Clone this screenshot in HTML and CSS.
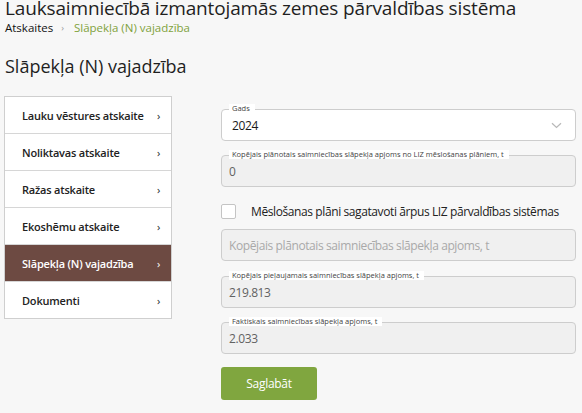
FILE: index.html
```html
<!DOCTYPE html>
<html>
<head>
    <title>Slāpekļa (N) vajadzība</title>
    <link rel="stylesheet" href="styles.css">
</head>
<body>
<div class="page-header">
    <h1 class="app-title">Lauksaimniecībā izmantojamās zemes pārvaldības sistēma</h1>
    <div class="breadcrumb">
        <span class="crumb">Atskaites</span>
        <span class="crumb-sep">›</span>
        <span class="crumb-current">Slāpekļa (N) vajadzība</span>
    </div>
</div>

<h2 class="page-title">Slāpekļa (N) vajadzība</h2>

<div class="content">
    <ul class="side-menu">
        <li class="menu-item"><span>Lauku vēstures atskaite</span><span class="chevron">›</span></li>
        <li class="menu-item"><span>Noliktavas atskaite</span><span class="chevron">›</span></li>
        <li class="menu-item"><span>Ražas atskaite</span><span class="chevron">›</span></li>
        <li class="menu-item"><span>Ekoshēmu atskaite</span><span class="chevron">›</span></li>
        <li class="menu-item active"><span>Slāpekļa (N) vajadzība</span><span class="chevron">›</span></li>
        <li class="menu-item"><span>Dokumenti</span><span class="chevron">›</span></li>
    </ul>

    <form class="report-form">
        <div class="field">
            <span class="field-label">Gads</span>
            <div class="field-box select-box">
                <span class="field-value">2024</span>
                <svg class="select-arrow" width="11" height="7" viewBox="0 0 11 7">
                    <path d="M1 1.2 L5.5 5.5 L10 1.2" fill="none" stroke="#b8b8b8" stroke-width="1.2"/>
                </svg>
            </div>
        </div>

        <div class="field">
            <span class="field-label">Kopējais plānotais saimniecības slāpekļa apjoms no LIZ mēslošanas plāniem, t</span>
            <div class="field-box disabled">
                <span class="field-value muted">0</span>
            </div>
        </div>

        <label class="check-row">
            <span class="checkbox"></span>
            <span>Mēslošanas plāni sagatavoti ārpus LIZ pārvaldības sistēmas</span>
        </label>

        <div class="field plain">
            <div class="field-box disabled">
                <span class="field-value placeholder">Kopējais plānotais saimniecības slāpekļa apjoms, t</span>
            </div>
        </div>

        <div class="field">
            <span class="field-label">Kopējais pieļaujamais saimniecības slāpekļa apjoms, t</span>
            <div class="field-box disabled">
                <span class="field-value muted">219.813</span>
            </div>
        </div>

        <div class="field">
            <span class="field-label">Faktiskais saimniecības slāpekļa apjoms, t</span>
            <div class="field-box disabled">
                <span class="field-value muted">2.033</span>
            </div>
        </div>

        <button type="button" class="save-btn">Saglabāt</button>
    </form>
</div>
</body>
</html>
```

FILE: styles.css
```css
body {
    margin: 0;
    background-color: #f7f7f7;
    font-family: "Open Sans", "Noto Sans", sans-serif;
    color: #222;
}

.page-header {
    padding: 0 5px;
}

.app-title {
    margin: 0;
    font-size: 19px;
    font-weight: 400;
    line-height: 16px;
    letter-spacing: -0.15px;
    color: #1f1f1f;
}

.breadcrumb {
    display: flex;
    align-items: center;
    font-size: 11.5px;
    line-height: 16px;
    margin-top: 4px;
}

.crumb {
    color: #111;
}

.crumb-sep {
    color: #999;
    font-size: 9px;
    margin: 0 10px 0 8px;
}

.crumb-current {
    color: #7fa23c;
}

.page-title {
    margin: 18px 0 0 5px;
    font-size: 18px;
    font-weight: 400;
    line-height: 24px;
    color: #1f1f1f;
}

.content {
    display: flex;
    align-items: flex-start;
    gap: 49px;
    margin-top: 18px;
    padding-left: 4px;
}

.side-menu {
    list-style: none;
    margin: 0;
    padding: 0;
    width: 166px;
    background-color: #fff;
    border: 1px solid #cfcfcf;
}

.menu-item {
    display: flex;
    justify-content: space-between;
    align-items: center;
    height: 36px;
    padding: 0 11px 0 17px;
    font-size: 11px;
    font-weight: 600;
    letter-spacing: -0.2px;
    color: #222;
    border-bottom: 1px solid #d6d6d6;
}

.menu-item:last-child {
    border-bottom: none;
}

.menu-item.active {
    background-color: #6d4a42;
    color: #fff;
}

.chevron {
    font-size: 11px;
    font-weight: 400;
}

.report-form {
    width: 355px;
    display: flex;
    flex-direction: column;
}

.field {
    position: relative;
    margin-top: 14px;
}

.field:first-child {
    margin-top: 13px;
}

.field-label {
    position: absolute;
    top: -5px;
    left: 8px;
    padding: 0 5px 0 3px;
    font-size: 7.5px;
    line-height: 9px;
    color: #444;
    background-color: #fff;
    white-space: nowrap;
}

.field-box {
    display: flex;
    align-items: center;
    justify-content: space-between;
    height: 30px;
    padding: 0 13px 0 10px;
    border: 1px solid #cdcdcd;
    border-radius: 4px;
    background-color: #fff;
    font-size: 12px;
    letter-spacing: -0.4px;
}

.field-box.disabled {
    background-color: #f0f0f0;
    padding-left: 7px;
}

.field-value {
    color: #1a1a1a;
}

.field-value.muted {
    color: #626262;
}

.field-value.placeholder {
    color: #a9a9a9;
}

.check-row {
    display: flex;
    align-items: center;
    gap: 15px;
    margin-top: 16px;
    height: 16px;
    font-size: 12px;
    letter-spacing: -0.4px;
    color: #222;
    white-space: nowrap;
}

.checkbox {
    width: 13px;
    height: 13px;
    border: 1px solid #c4c4c4;
    border-radius: 2px;
    background-color: #fff;
}

.field.plain {
    margin-top: 10px;
}

.field.plain + .field {
    margin-top: 15px;
}

.save-btn {
    align-self: flex-start;
    margin-top: 13px;
    width: 96px;
    height: 33px;
    border: none;
    border-radius: 3px;
    background-color: #80a63f;
    color: #fff;
    font-family: inherit;
    font-size: 12px;
    letter-spacing: -0.3px;
}
```
